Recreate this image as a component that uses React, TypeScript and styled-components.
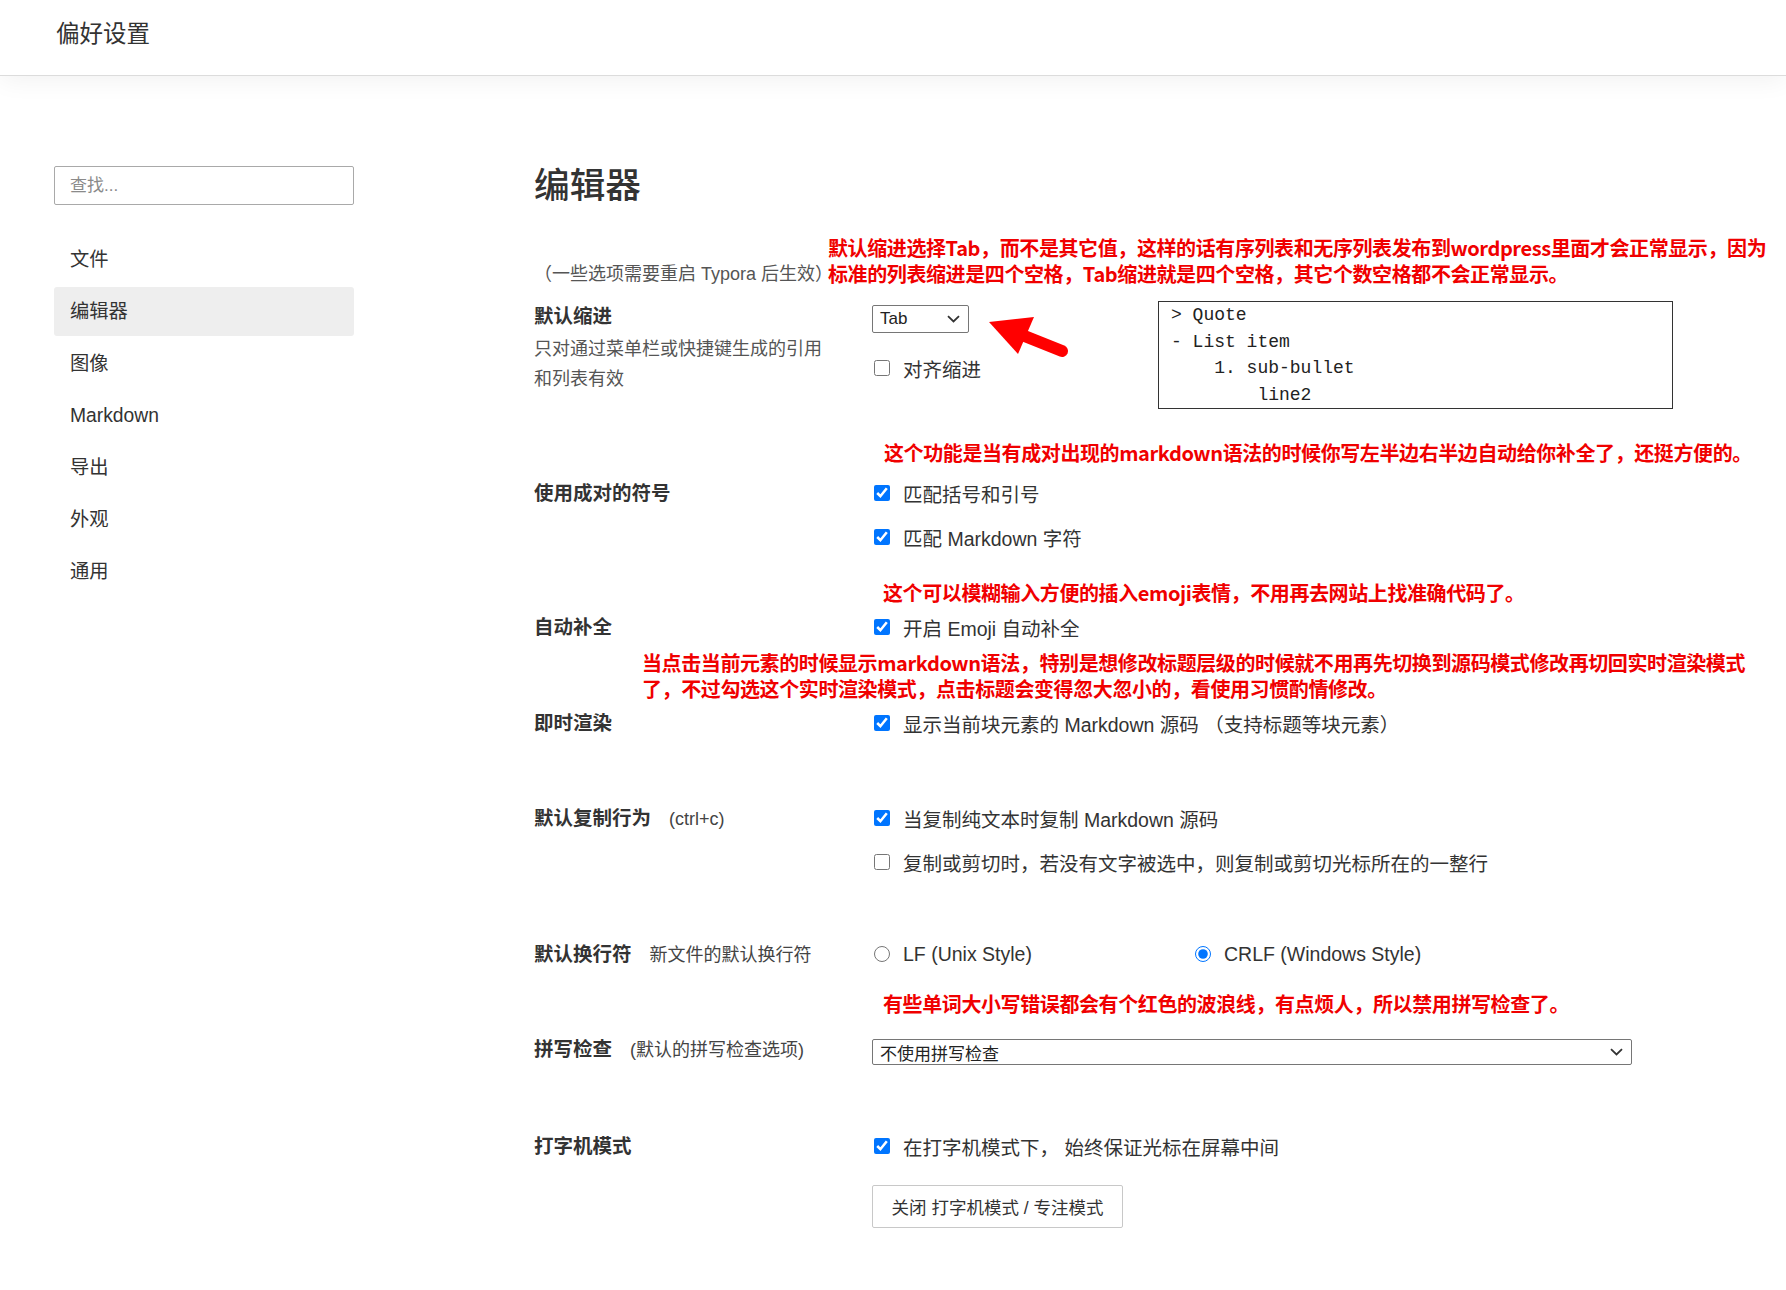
import * as React from "react"
import styled, { createGlobalStyle } from "styled-components"

const GlobalStyle = createGlobalStyle`
  html, body {
    margin: 0;
    padding: 0;
    background: #fff;
  }
  body {
    font-family: "Liberation Sans", "Noto Sans CJK SC", sans-serif;
    color: #333;
  }
  * {
    box-sizing: border-box;
  }
`

const Header = styled.header`
  position: relative;
  z-index: 1;
  height: 76px;
  padding: 19px 0 0 56px;
  background: #fff;
  border-bottom: 1px solid #dcdcdc;
  box-shadow: 0 4px 26px rgba(0, 0, 0, 0.06);
`

const Title = styled.h1`
  margin: 0;
  font-size: 23.5px;
  line-height: 30px;
  font-weight: normal;
  color: #333;
`

const Body = styled.div`
  display: flex;
  align-items: flex-start;
`

const Sidebar = styled.aside`
  flex-shrink: 0;
  width: 300px;
  margin-left: 54px;
  padding-top: 90px;
`

const Search = styled.input`
  display: block;
  width: 100%;
  height: 39px;
  padding: 0 15px;
  border: 1px solid #a9a9a9;
  border-radius: 2px;
  font: inherit;
  font-size: 17px;
  color: #333;
  outline: none;

  &::placeholder {
    color: #8a8a8a;
  }
`

const Nav = styled.nav`
  display: flex;
  flex-direction: column;
  gap: 3px;
  margin-top: 30px;
`

const NavItem = styled.div<{ $active?: boolean }>`
  height: 49px;
  padding-left: 16px;
  line-height: 49px;
  font-size: 19.3px;
  color: #333;
  border-radius: 3px;
  background: ${(p) => (p.$active ? "#eeeeee" : "transparent")};
`

const Main = styled.main`
  width: 1160px;
  margin-left: 180px;
  padding-top: 88px;
`

const Heading = styled.h2`
  margin: 0;
  font-size: 35.7px;
  line-height: 44px;
  font-weight: 500;
  color: #333;
`

const NoteRow = styled.div`
  display: flex;
  align-items: flex-end;
  margin-top: 27px;
`

const Note = styled.div`
  width: 294px;
  flex-shrink: 0;
  font-size: 18px;
  line-height: 26px;
  color: #555;
  white-space: nowrap;
`

const Annotation = styled.div<{ $top?: number; $indent?: number }>`
  margin-top: ${(p) => p.$top ?? 0}px;
  margin-left: ${(p) => p.$indent ?? 0}px;
  font-family: "Noto Sans CJK SC", sans-serif;
  font-weight: bold;
  font-size: 20px;
  line-height: 26px;
  letter-spacing: -0.4px;
  color: #f00000;
  white-space: nowrap;
`

const SettingRow = styled.section<{ $top: number }>`
  position: relative;
  display: flex;
  align-items: flex-start;
  margin-top: ${(p) => p.$top}px;
`

const LabelCol = styled.div`
  flex-shrink: 0;
  width: 338px;
`

const Label = styled.div`
  font-size: 19.5px;
  line-height: 30px;
  font-weight: bold;
  color: #333;
  white-space: nowrap;
`

const LabelHint = styled.span`
  margin-left: 18px;
  font-size: 18px;
  font-weight: normal;
  color: #444;
`

const Desc = styled.div`
  margin-top: 3px;
  font-size: 18px;
  line-height: 30px;
  color: #555;
`

const Controls = styled.div<{ $gap?: number; $width?: number }>`
  display: flex;
  flex-direction: column;
  align-items: flex-start;
  gap: ${(p) => p.$gap ?? 14}px;
  width: ${(p) => (p.$width ? `${p.$width}px` : "auto")};
  flex-shrink: 0;
`

const Option = styled.label<{ $top?: number }>`
  display: flex;
  align-items: center;
  height: 30px;
  margin-top: ${(p) => p.$top ?? 0}px;
  font-size: 19.5px;
  color: #333;
  white-space: nowrap;

  input {
    width: 16px;
    height: 16px;
    margin: 0 13px 0 2px;
  }
`

const RadioGroup = styled.div`
  display: flex;
`

const RadioOption = styled(Option)`
  width: 321px;
`

const Select = styled.div<{ $width: number; $height?: number; $top?: number }>`
  display: flex;
  align-items: center;
  justify-content: space-between;
  width: ${(p) => p.$width}px;
  height: ${(p) => p.$height ?? 28}px;
  margin-top: ${(p) => p.$top ?? 4}px;
  padding: 0 8px 0 7px;
  border: 1px solid #767676;
  border-radius: 2px;
  font-size: 17px;
  color: #222;
  background: #fff;
`

const CodeBox = styled.pre`
  width: 515px;
  height: 108px;
  margin: 0;
  padding: 0 12px;
  border: 1px solid #333;
  font-family: "Liberation Mono", monospace;
  font-size: 18px;
  line-height: 26.5px;
  color: #222;
`

const Button = styled.button`
  width: 251px;
  height: 43px;
  margin-top: 10px;
  padding: 0;
  border: 1px solid #c8c8c8;
  border-radius: 2px;
  background: #fff;
  font: inherit;
  font-size: 17.5px;
  color: #333;
`

const ArrowMark = styled.svg`
  position: absolute;
  left: 446px;
  top: 9px;
  width: 100px;
  height: 55px;
`

const Chevron = () => (
  <svg width="13" height="8" viewBox="0 0 13 8">
    <path d="M1 1.2 L6.5 6.5 L12 1.2" fill="none" stroke="#333" strokeWidth="1.8" />
  </svg>
)

const navItems = ["文件", "编辑器", "图像", "Markdown", "导出", "外观", "通用"]

const App: React.FC = () => {
  return (
    <>
      <GlobalStyle />
      <Header>
        <Title>偏好设置</Title>
      </Header>
      <Body>
        <Sidebar>
          <Search placeholder="查找..." />
          <Nav>
            {navItems.map((item) => (
              <NavItem key={item} $active={item === "编辑器"}>
                {item}
              </NavItem>
            ))}
          </Nav>
        </Sidebar>

        <Main>
          <Heading>编辑器</Heading>

          <NoteRow>
            <Note>（一些选项需要重启 Typora 后生效）</Note>
            <Annotation>
              默认缩进选择Tab，而不是其它值，这样的话有序列表和无序列表发布到wordpress里面才会正常显示，因为
              <br />
              标准的列表缩进是四个空格，Tab缩进就是四个空格，其它个数空格都不会正常显示。
            </Annotation>
          </NoteRow>

          <SettingRow $top={14}>
            <LabelCol>
              <Label>默认缩进</Label>
              <Desc>
                只对通过菜单栏或快捷键生成的引用
                <br />
                和列表有效
              </Desc>
            </LabelCol>
            <Controls $gap={0} $width={286}>
              <Select $width={97}>
                <span>Tab</span>
                <Chevron />
              </Select>
              <Option $top={20}>
                <input type="checkbox" />
                对齐缩进
              </Option>
            </Controls>
            <CodeBox>{"> Quote\n- List item\n    1. sub-bullet\n        line2"}</CodeBox>
            <ArrowMark viewBox="0 0 100 55">
              <line x1="42" y1="25" x2="82" y2="41" stroke="#f00" strokeWidth="12" strokeLinecap="round" />
              <polygon points="9,12 54,7 38,44" fill="#f00" />
            </ArrowMark>
          </SettingRow>

          <Annotation $top={31} $indent={350}>
            这个功能是当有成对出现的markdown语法的时候你写左半边右半边自动给你补全了，还挺方便的。
          </Annotation>

          <SettingRow $top={12}>
            <LabelCol>
              <Label>使用成对的符号</Label>
            </LabelCol>
            <Controls>
              <Option>
                <input type="checkbox" defaultChecked />
                匹配括号和引号
              </Option>
              <Option>
                <input type="checkbox" defaultChecked />
                匹配 Markdown 字符
              </Option>
            </Controls>
          </SettingRow>

          <Annotation $top={28} $indent={349}>
            这个可以模糊输入方便的插入emoji表情，不用再去网站上找准确代码了。
          </Annotation>

          <SettingRow $top={6}>
            <LabelCol>
              <Label>自动补全</Label>
            </LabelCol>
            <Controls>
              <Option>
                <input type="checkbox" defaultChecked />
                开启 Emoji 自动补全
              </Option>
            </Controls>
          </SettingRow>

          <Annotation $top={8} $indent={108}>
            当点击当前元素的时候显示markdown语法，特别是想修改标题层级的时候就不用再先切换到源码模式修改再切回实时渲染模式
            <br />
            了，不过勾选这个实时渲染模式，点击标题会变得忽大忽小的，看使用习惯酌情修改。
          </Annotation>

          <SettingRow $top={6}>
            <LabelCol>
              <Label>即时渲染</Label>
            </LabelCol>
            <Controls>
              <Option>
                <input type="checkbox" defaultChecked />
                显示当前块元素的 Markdown 源码 （支持标题等块元素）
              </Option>
            </Controls>
          </SettingRow>

          <SettingRow $top={65}>
            <LabelCol>
              <Label>
                默认复制行为<LabelHint>(ctrl+c)</LabelHint>
              </Label>
            </LabelCol>
            <Controls>
              <Option>
                <input type="checkbox" defaultChecked />
                当复制纯文本时复制 Markdown 源码
              </Option>
              <Option>
                <input type="checkbox" />
                复制或剪切时，若没有文字被选中，则复制或剪切光标所在的一整行
              </Option>
            </Controls>
          </SettingRow>

          <SettingRow $top={62}>
            <LabelCol>
              <Label>
                默认换行符<LabelHint>新文件的默认换行符</LabelHint>
              </Label>
            </LabelCol>
            <RadioGroup>
              <RadioOption>
                <input type="radio" name="eol" />
                LF (Unix Style)
              </RadioOption>
              <RadioOption>
                <input type="radio" name="eol" defaultChecked />
                CRLF (Windows Style)
              </RadioOption>
            </RadioGroup>
          </SettingRow>

          <Annotation $top={21} $indent={349}>
            有些单词大小写错误都会有个红色的波浪线，有点烦人，所以禁用拼写检查了。
          </Annotation>

          <SettingRow $top={17}>
            <LabelCol>
              <Label>
                拼写检查<LabelHint>(默认的拼写检查选项)</LabelHint>
              </Label>
            </LabelCol>
            <Select $width={760} $height={26} $top={5}>
              <span>不使用拼写检查</span>
              <Chevron />
            </Select>
          </SettingRow>

          <SettingRow $top={66}>
            <LabelCol>
              <Label>打字机模式</Label>
            </LabelCol>
            <Controls>
              <Option>
                <input type="checkbox" defaultChecked />
                在打字机模式下， 始终保证光标在屏幕中间
              </Option>
              <Button>关闭 打字机模式 / 专注模式</Button>
            </Controls>
          </SettingRow>
        </Main>
      </Body>
    </>
  )
}

export default App
